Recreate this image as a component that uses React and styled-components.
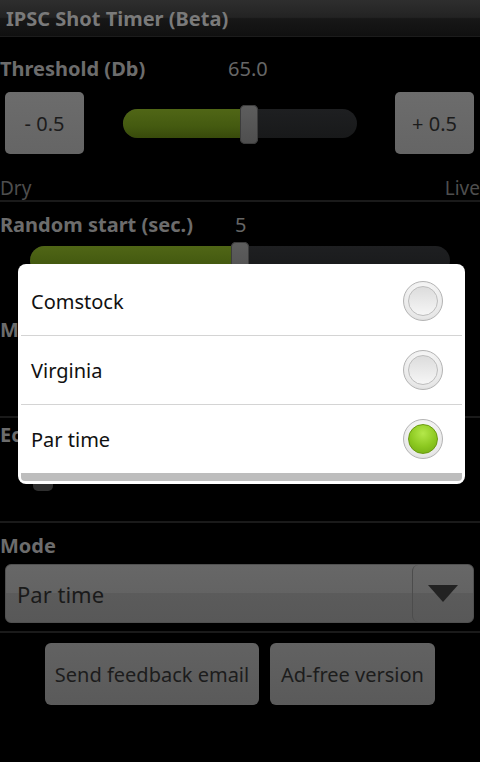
import styled, { createGlobalStyle } from 'styled-components'

const GlobalStyle = createGlobalStyle`
  html, body {
    margin: 0;
    padding: 0;
    background: #000;
  }
  body {
    font-family: 'Noto Sans', 'Open Sans', sans-serif;
  }
`

const Screen = styled.div`
  width: 480px;
  height: 762px;
  background: #000;
  position: relative;
  overflow: hidden;
  display: flex;
  flex-direction: column;
`

const TitleBar = styled.div`
  height: 36px;
  display: flex;
  align-items: center;
  padding-left: 6px;
  background: linear-gradient(#2e2e2e, #232323 48%, #171717 52%, #101010);
  border-bottom: 1px solid #1c1c1c;
  color: #7a7a7a;
  font-weight: bold;
  font-size: 20px;
`

const Section = styled.div`
  display: flex;
  flex-direction: column;
  padding: ${p => p.$pad || '0'};
  border-bottom: ${p => (p.$line ? '2px solid #1a1a1a' : 'none')};
`

const LabelRow = styled.div`
  height: 24px;
  display: flex;
  align-items: center;
  color: #6c6c6c;
  font-size: 20px;
`

const Label = styled.span`
  font-weight: bold;
  width: ${p => p.$w || 'auto'};
  white-space: nowrap;
`

const Value = styled.span`
  color: #666;
`

const SliderRow = styled.div`
  display: flex;
  align-items: center;
  justify-content: space-between;
  padding: 0 6px 0 5px;
  margin-top: 12px;
`

const StepButton = styled.div`
  width: 79px;
  height: 62px;
  border-radius: 5px;
  background: linear-gradient(#6c6c6c, #656565);
  display: flex;
  align-items: center;
  justify-content: center;
  color: #1c1c1c;
  font-size: 20px;
`

const Track = styled.div`
  position: relative;
  width: ${p => p.$w}px;
  height: 29px;
  margin: ${p => p.$m || '0'};
  border-radius: 15px;
  background: linear-gradient(#1e1f21, #18191a);
`

const Fill = styled.div`
  height: 100%;
  border-radius: 15px 0 0 15px;
  background: linear-gradient(#506616, #445a10 60%, #384a0b);
`

const Thumb = styled.div`
  position: absolute;
  top: -4px;
  width: 18px;
  height: 39px;
  margin-left: -9px;
  border-radius: 5px;
  background: linear-gradient(#5e5e5e, #4e4e4e);
  box-shadow: inset 0 0 0 1px #3c3c3c;
`

const EndLabels = styled.div`
  display: flex;
  justify-content: space-between;
  height: 24px;
  align-items: center;
  margin-top: 22px;
  color: #4e4e4e;
  font-size: 19px;
`

const CheckBox = styled.div`
  width: 20px;
  height: 26px;
  margin: 19px 0 0 33px;
  border-radius: 5px;
  background: #2e2e2e;
`

const Spinner = styled.div`
  display: flex;
  height: 59px;
  margin: 7px 6px 0 5px;
  border-radius: 6px;
  border: 1px solid #505050;
  box-sizing: border-box;
  background: linear-gradient(#676767, #636363 50%, #5b5b5b 50%, #585858);
  overflow: hidden;
`

const SpinnerText = styled.div`
  flex: 1;
  display: flex;
  align-items: center;
  padding-left: 11px;
  font-size: 22px;
  color: #1a1a1a;
`

const SpinnerArrow = styled.div`
  width: 60px;
  display: flex;
  align-items: center;
  justify-content: center;
  border-left: 1px solid #4c4c4c;
  border-radius: 6px;
`

const ButtonBar = styled.div`
  display: flex;
  justify-content: center;
  gap: 11px;
  padding-top: 10px;
`

const ActionButton = styled.div`
  width: ${p => p.$w}px;
  height: 62px;
  border-radius: 6px;
  background: linear-gradient(#626262, #5a5a5a);
  display: flex;
  align-items: center;
  justify-content: center;
  color: #1c1c1c;
  font-size: 20px;
`

const Overlay = styled.div`
  position: absolute;
  inset: 0;
`

const Dialog = styled.div`
  position: absolute;
  left: 18px;
  top: 264px;
  width: 447px;
  box-sizing: border-box;
  padding: 3px;
  background: #fff;
  border-radius: 8px;
`

const Option = styled.div`
  height: 68px;
  display: flex;
  align-items: center;
  justify-content: space-between;
  padding: 0 19px 0 10px;
  border-bottom: ${p => (p.$last ? 'none' : '1px solid #d4d4d4')};
  font-size: 20px;
  color: #111;
`

const Radio = styled.div`
  width: 40px;
  height: 40px;
  border-radius: 50%;
  box-sizing: border-box;
  border: 1px solid #b4b4b4;
  background: radial-gradient(circle at 50% 35%, #ffffff, #e8e8e8 70%, #d0d0d0);
  display: flex;
  align-items: center;
  justify-content: center;
`

const RadioDot = styled.div`
  width: 30px;
  height: 30px;
  border-radius: 50%;
  box-sizing: border-box;
  border: 1px solid ${p => (p.$on ? '#6a9a10' : '#bdbdbd')};
  background: ${p =>
    p.$on
      ? 'radial-gradient(circle at 50% 30%, #b4e84a, #8cc820 55%, #6fa812)'
      : 'linear-gradient(#dcdcdc, #f6f6f6)'};
`

const BottomBar = styled.div`
  height: 8px;
  background: #bdbdbd;
  border-radius: 0 0 4px 4px;
`

const Slider = ({ width, value, margin }) => (
  <Track $w={width} $m={margin}>
    <Fill style={{ width: `${value * 100}%` }} />
    <Thumb style={{ left: `${value * 100}%` }} />
  </Track>
)

const options = ['Comstock', 'Virginia', 'Par time']

const App = () => {
  const selected = 'Par time'

  return (
    <>
      <GlobalStyle />
      <Screen>
        <TitleBar>IPSC Shot Timer (Beta)</TitleBar>

        <Section $pad='19px 0 0 0' $line>
          <LabelRow>
            <Label $w='228px'>Threshold (Db)</Label>
            <Value>65.0</Value>
          </LabelRow>
          <SliderRow>
            <StepButton>- 0.5</StepButton>
            <Slider width={234} value={0.54} />
            <StepButton>+ 0.5</StepButton>
          </SliderRow>
          <EndLabels>
            <span>Dry</span>
            <span>Live</span>
          </EndLabels>
        </Section>

        <Section $pad='10px 0 0 0'>
          <LabelRow>
            <Label $w='235px'>Random start (sec.)</Label>
            <Value>5</Value>
          </LabelRow>
          <Slider width={420} value={0.5} margin='10px 0 0 30px' />
        </Section>

        <Section $pad='42px 0 0 0' $line>
          <LabelRow>
            <Label>Max shots</Label>
          </LabelRow>
          <div style={{ height: 75 }} />
        </Section>

        <Section $pad='4px 0 30px 0' $line>
          <LabelRow>
            <Label>Echo protection (ms)</Label>
          </LabelRow>
          <CheckBox />
        </Section>

        <Section $pad='10px 0 8px 0' $line>
          <LabelRow>
            <Label>Mode</Label>
          </LabelRow>
          <Spinner>
            <SpinnerText>Par time</SpinnerText>
            <SpinnerArrow>
              <svg width='30' height='18' viewBox='0 0 30 18'>
                <polygon points='0,0 30,0 15,17' fill='#222' />
              </svg>
            </SpinnerArrow>
          </Spinner>
        </Section>

        <ButtonBar>
          <ActionButton $w={214}>Send feedback email</ActionButton>
          <ActionButton $w={165}>Ad-free version</ActionButton>
        </ButtonBar>

        <Overlay>
          <Dialog>
            {options.map((name, i) => (
              <Option key={name} $last={i === options.length - 1}>
                <span>{name}</span>
                <Radio>
                  <RadioDot $on={name === selected} />
                </Radio>
              </Option>
            ))}
            <BottomBar />
          </Dialog>
        </Overlay>
      </Screen>
    </>
  )
}

export default App
